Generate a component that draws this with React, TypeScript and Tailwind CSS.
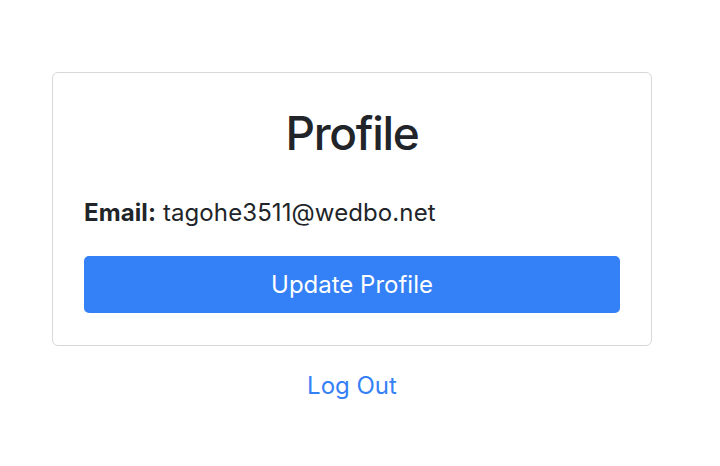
export default function App() {
  return (
    <div
      className="w-[704px] min-h-[466px] bg-white pt-[72px] flex flex-col items-center text-[#212529]"
      style={{ fontFamily: 'Inter, "Noto Sans", sans-serif' }}
    >
      <div className="w-[600px] border border-[#d8d8d8] rounded-[6px] px-[31px] pt-[32px] pb-[32px]">
        <h2 className="text-center text-[46px] font-medium leading-[56px] tracking-[-1.3px]">Profile</h2>
        <p className="mt-[34px] text-[24px] leading-[36px] tracking-[0.1px]">
          <strong className="font-bold">Email:</strong> tagohe3511@wedbo.net
        </p>
        <button className="mt-[25px] w-full h-[57px] rounded-[5px] bg-[#3480f6] text-white text-[24px] leading-[36px]">
          Update Profile
        </button>
      </div>
      <div className="mt-[22px] text-center">
        <a href="#" className="text-[#3480f6] text-[24px] leading-[36px]">
          Log Out
        </a>
      </div>
    </div>
  );
}
